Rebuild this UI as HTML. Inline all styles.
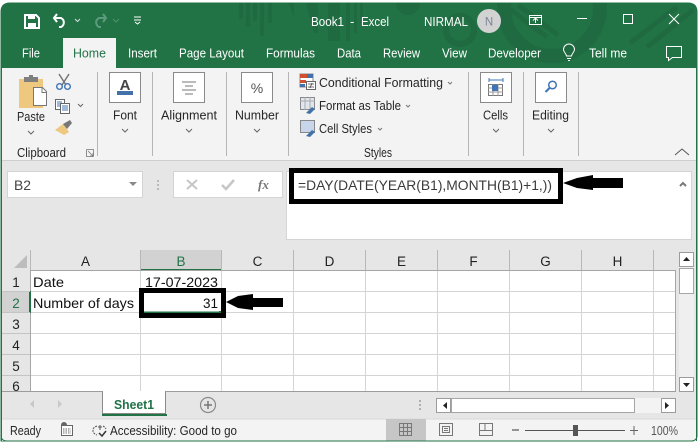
<!DOCTYPE html>
<html><head><meta charset="utf-8"><style>
html,body{margin:0;padding:0;background:#fff;width:700px;height:444px;overflow:hidden}
svg{display:block}
text{font-family:"Liberation Sans",sans-serif;font-size:13px;fill:#262626}
.w text,text.w{fill:#fff}
.h text{font-size:13.5px;fill:#333;text-anchor:middle}
.c text{font-size:14px;fill:#111}
</style></head><body>
<svg width="700" height="444" viewBox="0 0 700 444" xmlns="http://www.w3.org/2000/svg">
<rect width="700" height="444" fill="#fff"/>
<!-- window -->
<path d="M1 441V12Q1 3 10 3H688Q697 3 697 12V435Q697 441 691 441Z" fill="#e6e6e6" stroke="#217346" stroke-width="1"/>
<path d="M1 68V12Q1 3 10 3H688Q697 3 697 12V68Z" fill="#217346"/>
<!-- title pattern -->
<clipPath id="tb"><path d="M1 68V12Q1 3 10 3H688Q697 3 697 12V68Z"/></clipPath>
<g clip-path="url(#tb)">
<g fill="#1f6a41">
<rect x="239" y="3" width="4" height="16"/><rect x="246" y="3" width="4" height="24"/><rect x="253" y="3" width="4" height="18"/><rect x="260" y="3" width="4" height="33"/><rect x="268" y="3" width="4" height="20"/>
<path d="M288 3h6v14zM306 3h12v30h-4zM328 3h12v38h-12zM346 3h4v38h-4zM354 3h3v30h-3zM360 3h3v20h-3z"/>
<path d="M396 3h24a12 12 0 0 1-24 0z"/>
</g>
<g fill="none" stroke="#1f6a41">
<circle cx="460" cy="30" r="14" stroke-width="6"/>
<circle cx="552" cy="8" r="48" stroke-width="14"/>
<path d="M507 7l40 30M518 5l40 30M630 43l47-36M647 47l46-37" stroke-width="5"/>
</g>
</g>
<!-- QAT -->
<path d="M25 15h11l3 3v10H25z" fill="none" stroke="#fff" stroke-width="2"/><rect x="28" y="15" width="7" height="4" fill="#fff"/><rect x="28" y="23" width="8" height="5" fill="#fff"/>
<path d="M57 14l-3 4 3 4M54 18h7a5 5 0 0 1 0 9h-2" fill="none" stroke="#fff" stroke-width="2"/>
<path d="M75 19l2.500 2.500 2.500-2.500" fill="none" stroke="#ddd"/>
<path d="M103 14l3 4-3 4M106 18h-7a5 5 0 0 0 0 9h2" fill="none" stroke="#5c9c7c" stroke-width="2"/>
<path d="M113 19l3 3 3-3" fill="none" stroke="#4f9270"/>
<path d="M134 17h7M134 20h7M135 22l2.500 2 2.500-2" fill="none" stroke="#fff"/>
<!-- title -->
<g class="w">
<text x="311" y="26" textLength="33" lengthAdjust="spacingAndGlyphs">Book1</text>
<text x="350" y="26">-</text>
<text x="361" y="26" textLength="28" lengthAdjust="spacingAndGlyphs">Excel</text>
<text x="424" y="26" textLength="44" lengthAdjust="spacingAndGlyphs">NIRMAL</text>
</g>
<circle cx="489" cy="21" r="12" fill="#d2d2d2"/>
<text x="489" y="25.500" text-anchor="middle" style="fill:#7a8596;font-size:11.500px">N</text>
<rect x="529.500" y="15.500" width="12" height="9" fill="none" stroke="#fff"/><path d="M529 17.500h13M535.500 23v-5M533 20.500l2.500-2.500 2.500 2.500" fill="none" stroke="#fff"/>
<path d="M577 18.500h10" stroke="#fff"/>
<rect x="623.500" y="14.500" width="9" height="9" fill="none" stroke="#fff"/>
<path d="M669 14l10 10M679 14l-10 10" stroke="#fff"/>
<!-- tabs -->
<rect x="63" y="38" width="53" height="30" fill="#f3f3f3"/>
<text x="73" y="57.500" textLength="33" lengthAdjust="spacingAndGlyphs" style="fill:#217346">Home</text>
<g class="w">
<text x="22" y="57.500" textLength="18" lengthAdjust="spacingAndGlyphs">File</text>
<text x="128" y="57.500" textLength="29" lengthAdjust="spacingAndGlyphs">Insert</text>
<text x="179" y="57.500" textLength="65" lengthAdjust="spacingAndGlyphs">Page Layout</text>
<text x="266" y="57.500" textLength="49" lengthAdjust="spacingAndGlyphs">Formulas</text>
<text x="337" y="57.500" textLength="24" lengthAdjust="spacingAndGlyphs">Data</text>
<text x="383" y="57.500" textLength="37" lengthAdjust="spacingAndGlyphs">Review</text>
<text x="442" y="57.500" textLength="25" lengthAdjust="spacingAndGlyphs">View</text>
<text x="488" y="57.500" textLength="53" lengthAdjust="spacingAndGlyphs">Developer</text>
<text x="589" y="57.500" textLength="38" lengthAdjust="spacingAndGlyphs">Tell me</text>
</g>
<path d="M566.500 56c-.5-3-3-4-3-6.500a5.500 5.500 0 0 1 11 0c0 2.500-2.500 3.500-3 6.500zM567 58.500h4M568 60.500h2" fill="none" stroke="#fff"/>
<path d="M666.500 46.500h15v11h-9l-4 3v-3h-2z" fill="none" stroke="#fff"/>
<!-- ribbon -->
<rect x="2" y="68" width="695" height="92" fill="#f3f3f3"/>
<rect x="2" y="160" width="695" height="1" fill="#cfcfcf"/>
<g fill="#b5b5b5"><rect x="97" y="72" width="1" height="84"/><rect x="152" y="72" width="1" height="84"/><rect x="226" y="72" width="1" height="84"/><rect x="288" y="72" width="1" height="84"/><rect x="468" y="72" width="1" height="84"/><rect x="523" y="72" width="1" height="84"/><rect x="578" y="72" width="1" height="84"/></g>
<!-- clipboard -->
<rect x="19" y="79" width="24" height="29" fill="#edc87e"/>
<rect x="24" y="77" width="14" height="5" fill="#7f7f7f"/><rect x="29" y="75" width="4" height="4" fill="#7f7f7f"/>
<path d="M33.500 87.500h9l4 4v14h-13z" fill="#fff" stroke="#777"/><path d="M42 87.500v5h5" fill="none" stroke="#777"/>
<text x="17" y="121" textLength="28" lengthAdjust="spacingAndGlyphs">Paste</text>
<path d="M28 131l3 3 3-3" fill="none" stroke="#666"/>
<path d="M59 74l7 11M69 74l-7 11" stroke="#777" stroke-width="1.500"/>
<circle cx="59.500" cy="86.500" r="2.800" fill="none" stroke="#3f74b5" stroke-width="1.400"/><circle cx="67.500" cy="86.500" r="2.800" fill="none" stroke="#3f74b5" stroke-width="1.400"/>
<rect x="55.500" y="99.500" width="9" height="10" fill="#fff" stroke="#666"/><rect x="60.500" y="103.500" width="9" height="10" fill="#fff" stroke="#666"/>
<path d="M62 106h6M62 108h6M62 110h6" stroke="#3f74b5"/><path d="M57 102h5M57 104h3M57 106h3" stroke="#3f74b5"/>
<path d="M78 104l2.500 2.500 2.500-2.500" fill="none" stroke="#666"/>
<path d="M55 130l8-6 6 8-5 3z" fill="#edc87e"/><path d="M63 124l7-4 2 3-5 6z" fill="#777"/>
<text x="17" y="157" textLength="49" lengthAdjust="spacingAndGlyphs">Clipboard</text>
<path d="M86.500 149.500h7v7M86.500 149.500v7h7M88 151l5 5M93 153v3h-3" fill="none" stroke="#777" stroke-width=".8"/>
<!-- Font etc -->
<g fill="#fff" stroke="#8a8a8a"><rect x="109.500" y="72.500" width="31" height="30"/><rect x="173.500" y="72.500" width="31" height="30"/><rect x="241.500" y="72.500" width="31" height="30"/><rect x="480.500" y="72.500" width="31" height="30"/><rect x="535.500" y="72.500" width="31" height="30"/></g>
<text x="125" y="90" text-anchor="middle" style="font-size:15px;fill:#444;font-weight:bold">A</text><rect x="117" y="91" width="16" height="4" fill="#4472a8"/>
<path d="M182 82h14M185 86h8M182 90h14M185 94h8" stroke="#777"/>
<text x="257" y="93" text-anchor="middle" style="font-size:14px;fill:#555">%</text>
<text x="113" y="119.500" textLength="24" lengthAdjust="spacingAndGlyphs">Font</text>
<text x="161" y="119.500" textLength="56" lengthAdjust="spacingAndGlyphs">Alignment</text>
<text x="235" y="119.500" textLength="44" lengthAdjust="spacingAndGlyphs">Number</text>
<text x="483" y="119.500" textLength="25" lengthAdjust="spacingAndGlyphs">Cells</text>
<text x="532" y="119.500" textLength="37" lengthAdjust="spacingAndGlyphs">Editing</text>
<path d="M122 129l3 3 3-3M186 129l3 3 3-3M254 129l3 3 3-3M493 129l3 3 3-3M548 129l3 3 3-3" fill="none" stroke="#666"/>
<!-- styles -->
<rect x="300" y="74" width="13" height="13" fill="#fff" stroke="#888"/><rect x="300" y="74" width="7" height="4" fill="#d0502f"/><rect x="307" y="74" width="6" height="4" fill="#4472a8"/><rect x="300" y="80" width="6" height="3" fill="#d0502f"/><rect x="300" y="84" width="5" height="3" fill="#4472a8"/>
<rect x="306.500" y="81.500" width="9" height="8" fill="#fff" stroke="#666"/><path d="M308 84h6M308 87h6M312 83l-2 5" stroke="#444" stroke-width=".8"/>
<rect x="300.500" y="97.500" width="14" height="12" fill="#dfe6f0" stroke="#888"/><path d="M300 101h15M305 97v13M310 97v13" stroke="#aaa"/><path d="M306 113l6-6 3 2-5 5z" fill="#4472a8"/>
<rect x="300.500" y="120.500" width="14" height="12" fill="#c7d6ea" stroke="#888"/><path d="M306 136l6-6 3 2-5 5z" fill="#4472a8"/>
<text x="319" y="87" textLength="124" lengthAdjust="spacingAndGlyphs">Conditional Formatting</text>
<text x="319" y="110" textLength="82" lengthAdjust="spacingAndGlyphs">Format as Table</text>
<text x="319" y="133" textLength="53" lengthAdjust="spacingAndGlyphs">Cell Styles</text>
<path d="M448 82l2 2 2-2M406 105l2 2 2-2M378 128l2 2 2-2" fill="none" stroke="#777"/>
<text x="364" y="157" textLength="28" lengthAdjust="spacingAndGlyphs">Styles</text>
<rect x="488.500" y="84.500" width="14" height="11" fill="#fff" stroke="#777"/><path d="M488 88h15M488 92h15M493 84v12M498 84v12" stroke="#999"/><rect x="492" y="85" width="6" height="6" fill="#3f74b5"/><path d="M489 80h14M489 78v4M503 78v4" stroke="#3f74b5"/>
<circle cx="552.500" cy="85" r="3.800" fill="none" stroke="#3f74b5" stroke-width="1.500"/><path d="M549.500 88l-4 4" stroke="#3f74b5" stroke-width="2"/>
<path d="M675 155l7-6 7 6" fill="none" stroke="#555"/>
<!-- formula row -->
<rect x="7.500" y="171.500" width="135" height="26" fill="#fff" stroke="#d4d4d4"/>
<text x="14" y="190" style="font-size:13.500px;fill:#444" textLength="17" lengthAdjust="spacingAndGlyphs">B2</text>
<path d="M129 182h8l-4 4z" fill="#888"/>
<path d="M158 180v2M158 184v2M158 188v2" stroke="#aaa" stroke-width="1.500"/>
<rect x="173.500" y="171.500" width="109" height="26" fill="#fff" stroke="#d4d4d4"/>
<path d="M187 180l10 9M197 180l-10 9" stroke="#c6c6c6" stroke-width="2"/>
<path d="M222 185l4 4 8-9" fill="none" stroke="#c6c6c6" stroke-width="2.500"/>
<text x="258" y="189" style="font-family:'Liberation Serif',serif;font-size:13px;font-style:italic;font-weight:bold;fill:#777">fx</text>
<rect x="286.500" y="171.500" width="405" height="68" fill="#fff" stroke="#d4d4d4"/>
<path d="M680 186l3-3 3 3" fill="none" stroke="#777" stroke-width="2"/>
<!-- column headers -->
<rect x="2" y="250" width="677" height="20" fill="#e6e6e6"/>
<path d="M14 268l13-13v13z" fill="#bdbdbd"/>
<rect x="140" y="250" width="81" height="20" fill="#d2d2d2"/>
<rect x="140" y="269" width="81" height="2" fill="#217346"/>
<g class="h">
<text x="85.500" y="266" style="fill:#222">A</text><text x="181" y="266" style="fill:#217346">B</text><text x="257.500" y="266" style="fill:#222">C</text><text x="329.500" y="266" style="fill:#222">D</text><text x="401.500" y="266" style="fill:#222">E</text><text x="473.500" y="266" style="fill:#222">F</text><text x="545.500" y="266" style="fill:#222">G</text><text x="617.500" y="266" style="fill:#222">H</text>
</g>
<g fill="#b8b8b8"><rect x="30" y="250" width="1" height="20"/><rect x="140" y="250" width="1" height="20"/><rect x="221" y="250" width="1" height="20"/><rect x="293" y="250" width="1" height="20"/><rect x="365" y="250" width="1" height="20"/><rect x="437" y="250" width="1" height="20"/><rect x="509" y="250" width="1" height="20"/><rect x="581" y="250" width="1" height="20"/><rect x="653" y="250" width="1" height="20"/></g>
<!-- sheet -->
<rect x="31" y="271" width="644" height="120" fill="#fff"/>
<g fill="#d4d4d4">
<rect x="31" y="291" width="644" height="1"/><rect x="31" y="312" width="644" height="1"/><rect x="31" y="333" width="644" height="1"/><rect x="31" y="354" width="644" height="1"/><rect x="31" y="375" width="644" height="1"/>
<rect x="140" y="271" width="1" height="120"/><rect x="221" y="271" width="1" height="120"/><rect x="293" y="271" width="1" height="120"/><rect x="365" y="271" width="1" height="120"/><rect x="437" y="271" width="1" height="120"/><rect x="509" y="271" width="1" height="120"/><rect x="581" y="271" width="1" height="120"/><rect x="653" y="271" width="1" height="120"/>
</g>
<rect x="30" y="270" width="646" height="1" fill="#a6a6a6"/>
<rect x="675" y="270" width="1" height="121" fill="#a6a6a6"/>
<!-- row headers -->
<rect x="2" y="270" width="28" height="121" fill="#e6e6e6"/>
<rect x="2" y="292" width="28" height="20" fill="#d2d2d2"/>
<rect x="30" y="270" width="1" height="121" fill="#a6a6a6"/>
<rect x="29" y="291" width="2" height="22" fill="#217346"/>
<g fill="#c4c4c4"><rect x="2" y="291" width="28" height="1"/><rect x="2" y="312" width="28" height="1"/><rect x="2" y="333" width="28" height="1"/><rect x="2" y="354" width="28" height="1"/><rect x="2" y="375" width="28" height="1"/></g>
<g class="h">
<text x="16" y="287" style="fill:#222">1</text><text x="16" y="308" style="fill:#217346">2</text><text x="16" y="329" style="fill:#222">3</text><text x="16" y="350" style="fill:#222">4</text><text x="16" y="371" style="fill:#222">5</text><text x="16" y="391" style="fill:#222">6</text>
</g>
<rect x="2" y="391" width="677" height="28" fill="#e6e6e6"/>
<!-- cells -->
<g class="c">
<text x="33" y="287" textLength="31" lengthAdjust="spacingAndGlyphs">Date</text>
<text x="145" y="287" textLength="73" lengthAdjust="spacingAndGlyphs">17-07-2023</text>
<text x="33" y="308" textLength="101" lengthAdjust="spacingAndGlyphs">Number of days</text>
<text x="203" y="308" textLength="15" lengthAdjust="spacingAndGlyphs">31</text>
</g>
<!-- highlight boxes -->
<rect x="141.500" y="290.500" width="82" height="25" fill="none" stroke="#000" stroke-width="5"/>
<rect x="144" y="311.500" width="77" height="1.500" fill="#217346"/><rect x="219" y="311" width="2" height="2" fill="#217346"/>
<path d="M226 302l12-6 15-2v4h30v9h-30v3l-15-2z" fill="#000"/>
<rect x="291.500" y="170.500" width="269" height="31" fill="#fff" stroke="#000" stroke-width="5"/>
<text x="298" y="190" textLength="254" lengthAdjust="spacingAndGlyphs" style="font-size:14px;fill:#3b3b3b">=DAY(DATE(YEAR(B1),MONTH(B1)+1,))</text>
<path d="M563 183l14-5 16-3v3h30v10h-30v2l-16-2z" fill="#000"/>
<!-- vscroll -->
<rect x="679" y="252" width="15" height="139" fill="#efefef"/>
<rect x="679.500" y="252.500" width="14" height="14" fill="#fff" stroke="#9c9c9c"/><path d="M683 261h7l-3.500-4z" fill="#222"/>
<rect x="679.500" y="268.500" width="14" height="25" fill="#fff" stroke="#a6a6a6"/>
<rect x="679.500" y="377.500" width="14" height="14" fill="#fff" stroke="#9c9c9c"/><path d="M683 383h7l-3.500 4z" fill="#222"/>
<!-- tabs bar -->
<rect x="2" y="391" width="674" height="1" fill="#9c9c9c"/>
<path d="M34 400v8l-4-4zM58 400v8l4-4z" fill="#c8c8c8"/>
<path d="M102.500 391.500v22h63v-22" fill="#fff" stroke="#8a8a8a"/><rect x="103" y="391" width="62" height="2" fill="#fff"/>
<rect x="102" y="414" width="65" height="2" fill="#217346"/>
<text x="114" y="409" textLength="40" lengthAdjust="spacingAndGlyphs" style="font-weight:bold;font-size:13px;fill:#217346">Sheet1</text>
<circle cx="208" cy="405" r="7.500" fill="none" stroke="#8a8a8a" stroke-width="1.200"/><path d="M204 405h8M208 401v8" stroke="#777" stroke-width="1.500"/>
<path d="M420 400v2M420 404v2M420 408v2" stroke="#b0b0b0" stroke-width="2"/>
<!-- hscroll -->
<rect x="436" y="398" width="240" height="15" fill="#f3f3f3"/>
<rect x="436.500" y="398.500" width="14" height="14" fill="#fff" stroke="#9c9c9c"/><path d="M447 402v7l-4-3.500z" fill="#222"/>
<rect x="451.500" y="398.500" width="183" height="14" fill="#fff" stroke="#a6a6a6"/>
<rect x="661.500" y="398.500" width="14" height="14" fill="#fff" stroke="#9c9c9c"/><path d="M665 402v7l4-3.500z" fill="#222"/>
<!-- status -->
<rect x="2" y="419" width="694" height="22" fill="#f3f3f3"/>
<rect x="2" y="418.500" width="694" height="1" fill="#dadada"/>
<text x="10" y="435" textLength="31" lengthAdjust="spacingAndGlyphs">Ready</text>
<circle cx="64" cy="425" r="3" fill="#666"/><rect x="61.500" y="425.500" width="11" height="10" fill="#fff" stroke="#666"/><path d="M63 429h8M63 431h8M63 433h8" stroke="#666" stroke-dasharray="1.500 1"/>
<path d="M97 426a7 7 0 0 0-4 3v3a7 7 0 0 0 4 3M103 426a7 7 0 0 1 3 3" fill="none" stroke="#555" stroke-dasharray="2 1"/><path d="M100 425v5M98 427h4" stroke="#555"/><path d="M99 433l3 3 4-5" fill="none" stroke="#333" stroke-width="1.500"/>
<text x="110" y="435" textLength="127" lengthAdjust="spacingAndGlyphs">Accessibility: Good to go</text>
<rect x="386" y="419" width="40" height="22" fill="#c6c6c6"/>
<g fill="none" stroke="#777"><rect x="399.500" y="423.500" width="12" height="12"/><path d="M399 427.500h13M399 431.500h13M403.500 423v13M407.500 423v13"/>
<rect x="439.500" y="423.500" width="13" height="12"/><rect x="442.500" y="426.500" width="7" height="6"/><path d="M444 428.500h4M444 430.500h4"/>
<rect x="479.500" y="423.500" width="13" height="12"/><path d="M479 430.500h14M485 423v7"/></g>
<path d="M512 430h7" stroke="#555" stroke-width="1.200"/>
<path d="M525 430.500h100" stroke="#555"/>
<rect x="573" y="425" width="5" height="11" fill="#555"/>
<path d="M630 430.500h8M634 426v9" stroke="#666"/>
<text x="651" y="435" textLength="27" lengthAdjust="spacingAndGlyphs" style="fill:#555">100%</text>
<path d="M1 434v1Q1 441 7 441H691Q697 441 697 435V434" fill="none" stroke="#217346"/>
<rect x="1" y="68" width="1" height="373" fill="#217346"/><rect x="696" y="68" width="1" height="373" fill="#217346"/>
</svg>
</body></html>
